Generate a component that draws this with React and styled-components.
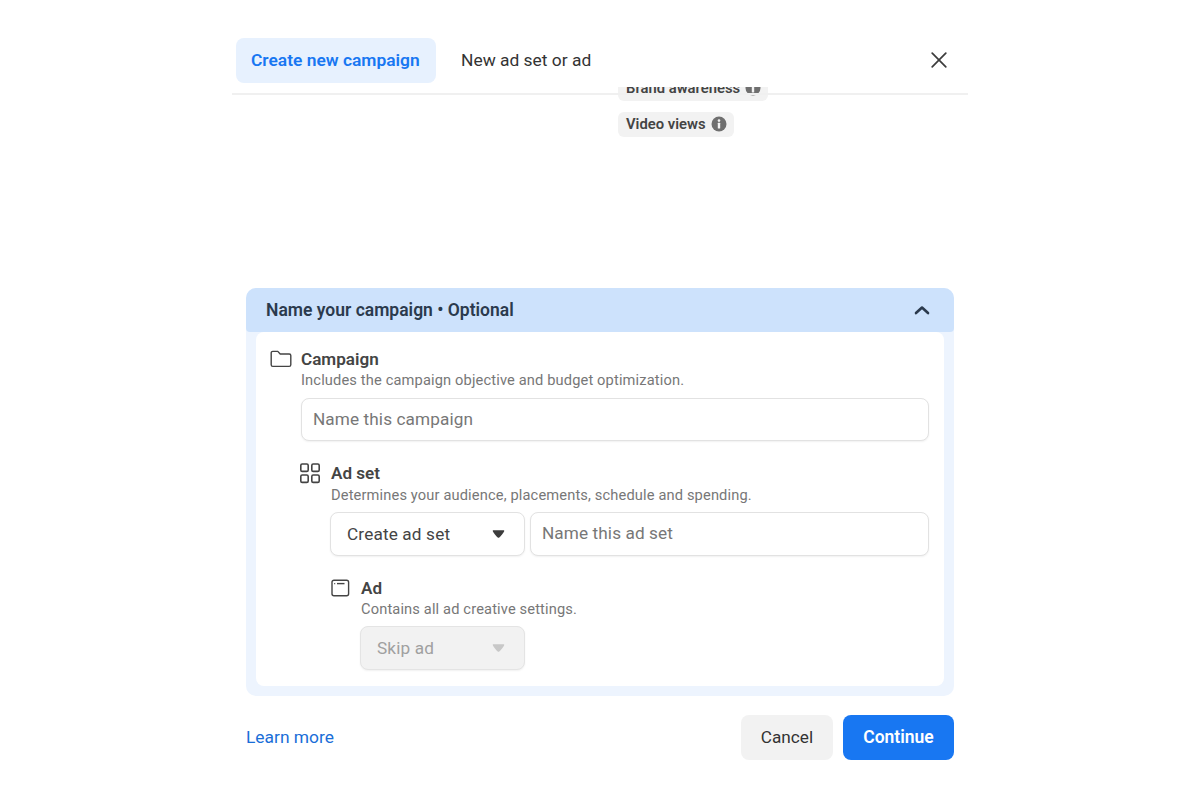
import React from 'react'
import styled, { createGlobalStyle } from 'styled-components'

const GlobalStyle = createGlobalStyle`
    html, body {
        margin: 0;
        background: #fff;
        font-family: Roboto, "Liberation Sans", sans-serif;
    }
    * {
        box-sizing: border-box;
    }
`

const Page = styled.div`
    display: flex;
    justify-content: center;
    height: 800px;
    padding-top: 38px;
    overflow: hidden;
`

const Modal = styled.div`
    width: 736px;
    display: flex;
    flex-direction: column;
`

const Header = styled.div`
    position: relative;
    z-index: 1;
    display: flex;
    align-items: flex-start;
    height: 57px;
    padding-left: 4px;
    padding-right: 18px;
    border-bottom: 2px solid #f0f0f0;
`

const Tab = styled.div`
    height: 45px;
    display: flex;
    align-items: center;
    width: ${props => props.active ? '200px' : 'auto'};
    padding: 0 ${props => props.active ? '15px' : '25px'} 2px;
    border-radius: 8px;
    font-size: 17.4px;
    font-weight: ${props => props.active ? 600 : 400};
    color: ${props => props.active ? '#1877f2' : '#333'};
    background: ${props => props.active ? '#e7f1fe' : 'transparent'};
`

const CloseButton = styled.div`
    margin-left: auto;
    width: 22px;
    height: 45px;
    padding-bottom: 2px;
    display: flex;
    align-items: center;
    justify-content: center;
    color: #3c3c3c;
`

/* the list is scrolled, its first chip slides under the header */
const ScrollArea = styled.div`
    height: 201px;
    margin-top: -8px;
    overflow: hidden;
    padding-left: 386px;
`

const Chips = styled.div`
    display: flex;
    flex-direction: column;
    align-items: flex-start;
    gap: 11px;
    margin-top: -11px;
`

const Chip = styled.div`
    height: 25px;
    display: flex;
    align-items: center;
    gap: 5px;
    padding: 0 7px 1px 8px;
    border-radius: 6px;
    background: #f2f2f2;
    font-size: 14.8px;
    font-weight: 600;
    color: #444;
`

const Panel = styled.div`
    margin: 0 14px;
    border-radius: 10px;
    background: #edf4fe;
`

const PanelHead = styled.div`
    height: 44px;
    display: flex;
    align-items: center;
    justify-content: space-between;
    padding: 0 24px 0 20px;
    border-radius: 10px 10px 4px 4px;
    background: #cde2fc;
    font-size: 17.5px;
    font-weight: 600;
    color: #2b3a4d;
`

const PanelBody = styled.div`
    padding: 0 10px 10px;
`

const Card = styled.div`
    height: 354px;
    padding: 18px 15px 0 14px;
    border-radius: 8px;
    background: #fff;
`

const Level = styled.div`
    display: grid;
    grid-template-columns: ${props => props.indent}px 1fr;
    margin-top: ${props => props.first ? '0' : '23px'};
`

const IconCell = styled.div`
    height: 20px;
    margin-top: -1px;
    display: flex;
    align-items: center;
    margin-left: ${props => props.shift || 0}px;
    color: #444;
`

const LevelContent = styled.div`
    min-width: 0;
`

const Title = styled.div`
    margin-top: -1px;
    font-size: 17.1px;
    line-height: 20px;
    font-weight: 600;
    color: #444;
    padding-left: ${props => props.inset ? '1px' : '0'};
`

const Description = styled.div`
    margin-top: ${props => props.loose ? '4px' : '3px'};
    padding-left: ${props => props.inset ? '1px' : '0'};
    font-size: 14.65px;
    line-height: 17px;
    letter-spacing: 0.14px;
    color: #777;
`

const TextField = styled.div`
    flex: 1;
    height: ${props => props.tall ? '43px' : '44px'};
    display: flex;
    align-items: center;
    padding: 0 11px 2px;
    border: 1px solid #e2e2e2;
    border-radius: 8px;
    box-shadow: 0 1px 2px rgba(0, 0, 0, 0.06);
    font-size: 17.2px;
    letter-spacing: 0.1px;
    color: #777;
    background: #fff;
    margin-top: ${props => props.tall ? '9px' : '0'};
`

const Row = styled.div`
    display: flex;
    gap: 5px;
    margin-top: 8px;
`

const Select = styled.div`
    width: ${props => props.disabled ? '165px' : '195px'};
    height: 44px;
    display: flex;
    align-items: center;
    justify-content: space-between;
    padding: 0 19px 1px 16px;
    border: 1px solid ${props => props.disabled ? '#e4e4e4' : '#e2e2e2'};
    border-radius: 8px;
    box-shadow: 0 1px 2px rgba(0, 0, 0, 0.06);
    background: ${props => props.disabled ? '#f2f2f2' : '#fff'};
    font-size: 17.2px;
    letter-spacing: 0.15px;
    color: ${props => props.disabled ? '#a0a0a0' : '#444'};
`

const Caret = styled.svg`
    width: 13px;
    height: 8px;
    fill: ${props => props.disabled ? '#c8c8c8' : '#3c3c3c'};
`

const Footer = styled.div`
    display: flex;
    align-items: center;
    gap: 10px;
    margin: 19px 14px 0;
`

const LearnMore = styled.a`
    margin-right: auto;
    padding-bottom: 2px;
    font-size: 17.4px;
    color: #1a6ed8;
`

const Button = styled.div`
    height: 45px;
    display: flex;
    align-items: center;
    justify-content: center;
    padding-bottom: 2px;
    width: ${props => props.primary ? '111px' : '92px'};
    border-radius: 8px;
    font-size: ${props => props.primary ? '17.5px' : '17.2px'};
    font-weight: ${props => props.primary ? 600 : 400};
    color: ${props => props.primary ? '#fff' : '#333'};
    background: ${props => props.primary ? '#1877f2' : '#f2f2f2'};
`

const InfoIcon = () => (
    <svg width="16" height="16" viewBox="0 0 16 16">
        <circle cx="8" cy="8" r="7.5" fill="#6f6f6f" />
        <circle cx="8" cy="4.6" r="1.3" fill="#f2f2f2" />
        <rect x="6.8" y="6.8" width="2.4" height="5.8" rx="0.5" fill="#f2f2f2" />
    </svg>
)

const FolderIcon = () => (
    <svg width="22" height="18" viewBox="0 0 22 18" fill="none" stroke="currentColor" strokeWidth="1.4" strokeLinejoin="round">
        <path d="M1.2 3a1.6 1.6 0 0 1 1.6-1.6h5l2.400 2.600h9a1.600 1.600 0 0 1 1.600 1.600v9.200a1.600 1.600 0 0 1-1.600 1.600H2.800a1.600 1.600 0 0 1-1.600-1.600z" />
    </svg>
)

const GridIcon = () => (
    <svg width="22" height="22" viewBox="0 0 22 22" fill="none" stroke="currentColor" strokeWidth="1.6">
        <rect x="1.8" y="2" width="7.4" height="7.4" rx="1.4" />
        <rect x="12.8" y="2" width="7.4" height="7.4" rx="1.4" />
        <rect x="1.8" y="13" width="7.4" height="7.4" rx="1.4" />
        <rect x="12.8" y="13" width="7.4" height="7.4" rx="1.4" />
    </svg>
)

const WindowIcon = () => (
    <svg width="20" height="18" viewBox="0 0 20 18" fill="none" stroke="currentColor" strokeWidth="1.4">
        <rect x="2" y="1.2" width="16.6" height="15.6" rx="2" />
        <path d="M7 4.600h7.500" />
        <path d="M4.200 4.600h1" />
    </svg>
)

const DownCaret = ({ disabled }) => (
    <Caret disabled={disabled} viewBox="0 0 14 9">
        <path d="M0.6 1.4C0.3 0.7 0.7 0.3 1.4 0.3h11.2c0.7 0 1.1 0.4 0.8 1.1C12.6 3 9.6 7 7.9 8.3c-0.5 0.4-1.3 0.4-1.8 0C4.400 7 1.400 3 0.6 1.400z" />
    </Caret>
)

const App = () => (
    <>
        <GlobalStyle />
        <Page>
            <Modal>
                <Header>
                    <Tab active>Create new campaign</Tab>
                    <Tab>New ad set or ad</Tab>
                    <CloseButton>
                        <svg width="16" height="16" viewBox="0 0 16 16" fill="none" stroke="currentColor" strokeWidth="1.7" strokeLinecap="round">
                            <path d="M1.2 1.2l13.6 13.6M14.8 1.200L1.200 14.800" />
                        </svg>
                    </CloseButton>
                </Header>
                <ScrollArea>
                    <Chips>
                        <Chip>Brand awareness <InfoIcon /></Chip>
                        <Chip>Video views <InfoIcon /></Chip>
                    </Chips>
                </ScrollArea>
                <Panel>
                    <PanelHead>
                        Name your campaign • Optional
                        <svg width="16" height="10" viewBox="0 0 16 10" fill="none" stroke="#2b3a4d" strokeWidth="2.6" strokeLinecap="round" strokeLinejoin="round">
                            <path d="M2 8l6-5.500 6 5.500" />
                        </svg>
                    </PanelHead>
                    <PanelBody>
                        <Card>
                            <Level first indent={31}>
                                <IconCell><FolderIcon /></IconCell>
                                <LevelContent>
                                    <Title>Campaign</Title>
                                    <Description>Includes the campaign objective and budget optimization.</Description>
                                    <TextField tall>Name this campaign</TextField>
                                    <Level indent={29}>
                                        <IconCell shift={-2}><GridIcon /></IconCell>
                                        <LevelContent>
                                            <Title inset>Ad set</Title>
                                            <Description inset loose>Determines your audience, placements, schedule and spending.</Description>
                                            <Row>
                                                <Select>Create ad set <DownCaret /></Select>
                                                <TextField>Name this ad set</TextField>
                                            </Row>
                                            <Level indent={30}>
                                                <IconCell><WindowIcon /></IconCell>
                                                <LevelContent>
                                                    <Title inset>Ad</Title>
                                                    <Description inset>Contains all ad creative settings.</Description>
                                                    <Row>
                                                        <Select disabled>Skip ad <DownCaret disabled /></Select>
                                                    </Row>
                                                </LevelContent>
                                            </Level>
                                        </LevelContent>
                                    </Level>
                                </LevelContent>
                            </Level>
                        </Card>
                    </PanelBody>
                </Panel>
                <Footer>
                    <LearnMore>Learn more</LearnMore>
                    <Button>Cancel</Button>
                    <Button primary>Continue</Button>
                </Footer>
            </Modal>
        </Page>
    </>
)

export default App
